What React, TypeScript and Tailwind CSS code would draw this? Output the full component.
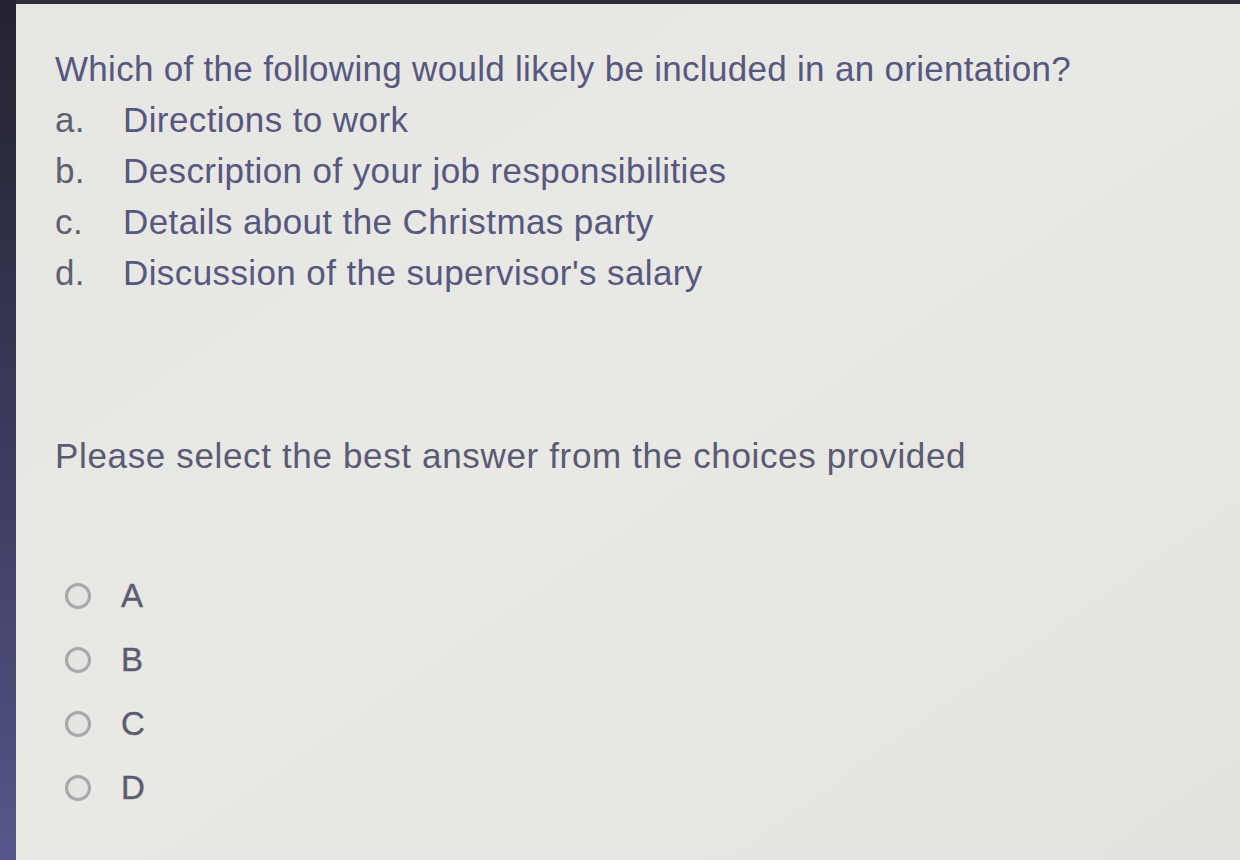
const options = [
  { key: 'a.', text: 'Directions to work' },
  { key: 'b.', text: 'Description of your job responsibilities' },
  { key: 'c.', text: 'Details about the Christmas party' },
  { key: 'd.', text: "Discussion of the supervisor's salary" },
];

const choices = ['A', 'B', 'C', 'D'];

export default function App() {
  return (
    <div
      className="w-[1240px] h-[860px] flex overflow-hidden bg-[#2c2c44]"
      style={{ fontFamily: '"Liberation Sans", Arial, sans-serif' }}
    >
      <div className="w-[16px] shrink-0 bg-gradient-to-b from-[#23232f] via-[#3a3a5c] to-[#56568a]" />
      <div className="flex-1 flex flex-col pt-[4px] bg-[#2e2e3a]">
        <div className="flex-1 bg-gradient-to-br from-[#e6e6e3] via-[#e8e8e4] to-[#e2e3dc] pl-[39px] pt-[39px] text-[#57577f]">
          <p className="text-[35px] leading-[51px] tracking-[0.3px]">
            Which of the following would likely be included in an orientation?
          </p>
          <div className="flex flex-col">
            {options.map(o => (
              <div key={o.key} className="flex text-[35px] leading-[51px] tracking-[0.4px]">
                <span className="w-[68px] text-[#60606e]">{o.key}</span>
                <span>{o.text}</span>
              </div>
            ))}
          </div>

          <p className="mt-[132px] text-[35px] leading-[51px] tracking-[0.65px] text-[#5a5a74]">
            Please select the best answer from the choices provided
          </p>

          <div className="mt-[102px] flex flex-col gap-[38px]">
            {choices.map(c => (
              <label key={c} className="flex items-center h-[26px]">
                <span className="ml-[10px] w-[26px] h-[26px] rounded-full border-[3px] border-[#a8a8a6] bg-[#e4e4e0]" />
                <span className="ml-[30px] text-[33px] text-[#5c5c6e] [-webkit-text-stroke:0.4px_#5c5c6e]">{c}</span>
              </label>
            ))}
          </div>
        </div>
      </div>
    </div>
  );
}
